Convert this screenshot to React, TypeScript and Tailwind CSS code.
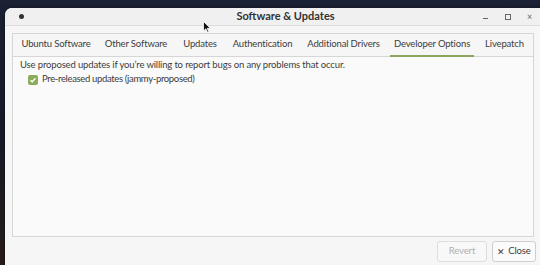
import React from 'react';

const tabs = [
  { label: 'Ubuntu Software', w: 'w-[82px]' },
  { label: 'Other Software', w: 'w-[78px]' },
  { label: 'Updates', w: 'w-[50px]' },
  { label: 'Authentication', w: 'w-[75px]' },
  { label: 'Additional Drivers', w: 'w-[87px]' },
  { label: 'Developer Options', w: 'w-[90px]', active: true },
  { label: 'Livepatch', w: 'w-[55px]' },
];

const Cursor = () => (
  <svg className="absolute left-[203px] top-[21px]" width="8" height="12" viewBox="0 0 8 12">
    <path d="M0.5 0.5 L0.5 10 L2.8 7.8 L4.5 11.3 L5.8 10.7 L4.2 7.3 L7.3 7.3 Z" fill="#111" stroke="#fff" strokeWidth="0.8" />
  </svg>
);

export default function App() {
  return (
    <div className="relative w-[540px] h-[265px] overflow-hidden bg-gradient-to-b from-[#1c2235] via-[#151a28] to-[#2a1d1a] font-['Lato','Noto_Sans',sans-serif] text-[#3c3c3c] tracking-[-0.15px]">
      <div className="absolute left-[5px] top-[8px] w-[540px] h-[270px] flex flex-col rounded-tl-[7px] bg-[#f6f6f6] shadow-[0_0_4px_rgba(0,0,0,0.5)]">
        {/* title bar */}
        <div className="h-[18px] flex items-center border-b border-[#dcdcdc] bg-[#f0f0f0] rounded-tl-[7px]">
          <div className="w-[5px] h-[5px] rounded-full bg-[#333] ml-[14px]" />
          <div className="flex-1 text-center text-[11px] font-bold text-[#333] pl-[66px] tracking-normal">Software &amp; Updates</div>
          <div className="flex items-center gap-[13px] mr-[11px] text-[#555]">
            <span className="w-[9px] h-[9px] flex items-end justify-center"><span className="block w-[5px] h-[1px] bg-[#666] mb-[2px]" /></span>
            <span className="w-[9px] h-[9px] flex items-center justify-center"><span className="block w-[6px] h-[6px] border border-[#666]" /></span>
            <span className="w-[9px] h-[9px] flex items-center justify-center text-[9px] leading-none text-[#666]">×</span>
          </div>
        </div>
        {/* notebook */}
        <div className="mt-[7px] ml-[7px] w-[522px] h-[204px] border border-[#d6d6d6] bg-[#fafafa] flex flex-col">
          <div className="h-[23px] flex items-stretch border-b border-[#d6d6d6] bg-[#f6f6f6] pl-[2px]">
            {tabs.map((t) => (
              <div key={t.label} className={`${t.w} relative flex items-center justify-center pb-[2px] text-[9.5px] whitespace-nowrap text-[#3c3c3c]`}>
                {t.label}
                {t.active && <span className="absolute left-[3px] right-[3px] bottom-[-1px] h-[2px] bg-[#8ca55c]" />}
              </div>
            ))}
          </div>
          <div className="pt-[2px] pl-[7px] text-[9.5px]">
            <div className="h-[13px] flex items-center">Use proposed updates if you’re willing to report bugs on any problems that occur.</div>
            <div className="h-[15px] flex items-center pl-[8px] gap-[4px] tracking-[-0.35px]">
              <span className="w-[10px] h-[10px] rounded-[2px] bg-[#8cab5c] flex items-center justify-center">
                <svg width="8" height="8" viewBox="0 0 8 8"><path d="M1.5 4.2 L3.2 5.8 L6.5 2.2" fill="none" stroke="#fff" strokeWidth="1.3" /></svg>
              </span>
              Pre-released updates (jammy-proposed)
            </div>
          </div>
        </div>
        {/* buttons */}
        <div className="flex justify-end gap-[5px] pr-[9px] mt-[4px] text-[9.5px]">
          <div className="w-[50px] h-[21px] border border-[#dedede] rounded-[3px] bg-[#f8f8f8] flex items-center justify-center text-[#b0b0b0]">Revert</div>
          <div className="w-[44px] h-[21px] border border-[#cfcfcf] rounded-[3px] bg-[#fbfbfb] flex items-center justify-center gap-[3px] text-[#3c3c3c]">
            <span className="text-[9px] leading-none">✕</span>Close
          </div>
        </div>
      </div>
      <Cursor />
    </div>
  );
}
